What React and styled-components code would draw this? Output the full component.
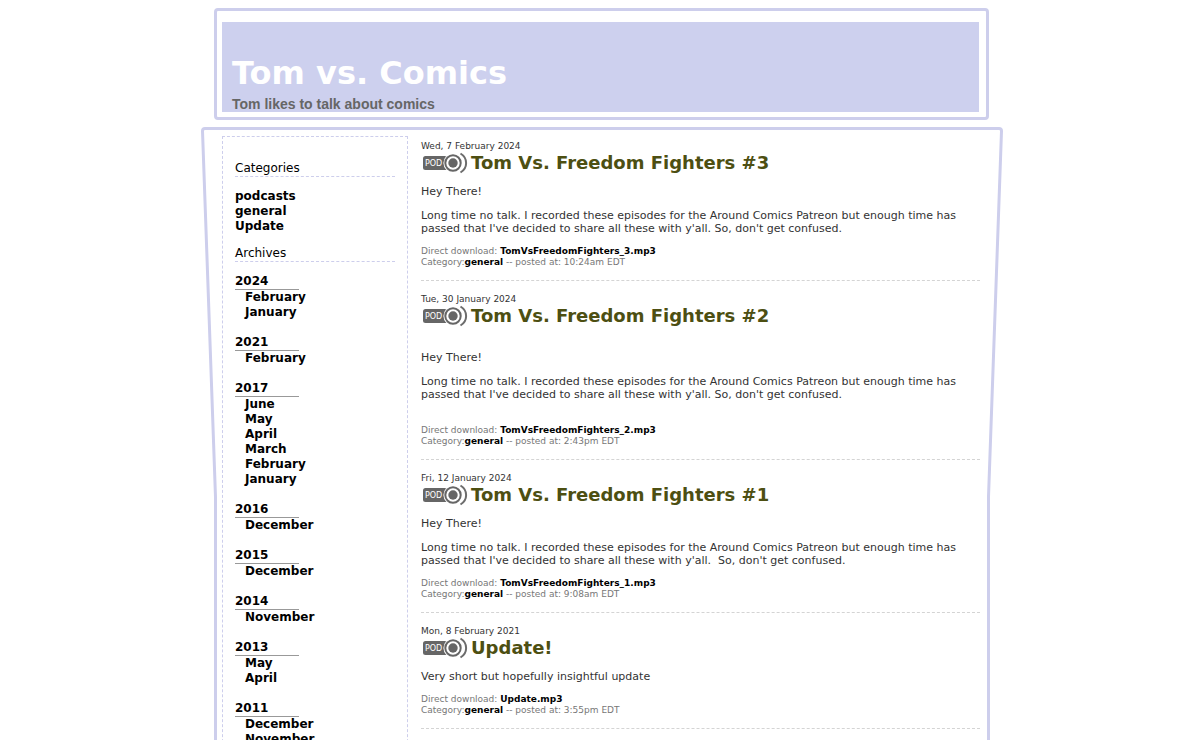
import React from 'react';
import styled, { createGlobalStyle } from 'styled-components';

const GlobalStyle = createGlobalStyle`
  body {
    margin: 0;
    padding: 8px 0 0 4px;
    background: #fff;
    color: #333;
    font-family: Verdana, 'DejaVu Sans', sans-serif;
    font-size: 11px;
  }
  html {
    scrollbar-width: none;
  }
  a {
    color: #000;
    font-weight: bold;
    text-decoration: none;
  }
`;

const Page = styled.div`
  max-width: 802px;
  margin: 0 auto;
`;

const Header = styled.header`
  margin: 0 14px 7px 13px;
  padding: 11px 7px 5px 5px;
  border: 3px solid #cdceec;
  border-radius: 4px;
`;

const Banner = styled.div`
  box-sizing: border-box;
  height: 90px;
  padding: 31px 10px 0;
  background: #cdd0ee;
`;

const SiteTitle = styled.h1`
  margin: 0;
  color: #fff;
  font-size: 32px;
  line-height: 40px;
`;

const Tagline = styled.h2`
  margin: 3px 0 0;
  color: #666;
  font-family: Arial, 'Liberation Sans', sans-serif;
  font-size: 14px;
  line-height: 16px;
`;

const Body = styled.div`
  position: relative;
  display: flex;
  align-items: flex-start;
  padding: 9px 23px 40px 21px;

  &::before {
    content: '';
    position: absolute;
    top: 370px;
    right: 13px;
    bottom: 0;
    left: 13px;
    border: solid #cdceec;
    border-width: 0 3px 3px;
    border-radius: 0 0 4px 4px;
    pointer-events: none;
  }
`;

const FrameTop = styled.svg`
  position: absolute;
  top: 0;
  left: 0;
  width: 100%;
  height: 370px;
  pointer-events: none;
`;

const Sidebar = styled.nav`
  box-sizing: border-box;
  flex: 0 0 186px;
  padding: 24px 12px;
  border: 1px dashed #cdceec;
  color: #000;
  font-size: 12px;
  line-height: 15px;
`;

const SectionTitle = styled.h3`
  margin: 0 0 12px;
  border-bottom: 1px dashed #cdceec;
  font-size: 12px;
  font-weight: normal;
`;

const LinkList = styled.ul`
  margin: 0;
  padding: 0 0 0 ${(props) => (props.$indent ? '10px' : '0')};
  list-style: none;
`;

const Categories = styled.div`
  margin-bottom: 12px;
`;

const Year = styled.div`
  margin-bottom: 15px;
`;

const YearTitle = styled.h4`
  width: 64px;
  margin: 0;
  border-bottom: 1px solid #999;
  font-size: 12px;
`;

const Posts = styled.main`
  flex: 1;
  min-width: 0;
  margin-left: 13px;
  padding-top: 4px;
`;

const Post = styled.article`
  margin-bottom: 12px;
  padding-bottom: 12px;
  border-bottom: 1px dashed #d4d4d4;
`;

const PostDate = styled.div`
  font-size: 9px;
  line-height: 11px;
  padding-top: 1px;
`;

const PostTitle = styled.h2`
  display: flex;
  align-items: center;
  gap: 2px;
  height: 22px;
  margin: 0;
  color: #4d4f12;
  font-size: 18px;
  line-height: 22px;
`;

const PostBody = styled.div`
  margin: 11px 0;
  padding: ${(props) => (props.$spaced ? '13px 0 2px' : '0')};
  line-height: 13px;

  p {
    margin: 0 0 11px;
  }
`;

const Meta = styled.div`
  color: #777;
  font-size: 9px;
  line-height: 11px;
`;

const categories = ['podcasts', 'general', 'Update'];

const archives = [
  { year: '2024', months: ['February', 'January'] },
  { year: '2021', months: ['February'] },
  { year: '2017', months: ['June', 'May', 'April', 'March', 'February', 'January'] },
  { year: '2016', months: ['December'] },
  { year: '2015', months: ['December'] },
  { year: '2014', months: ['November'] },
  { year: '2013', months: ['May', 'April'] },
  { year: '2011', months: ['December', 'November'] },
];

const longText =
  "Long time no talk. I recorded these episodes for the Around Comics Patreon but enough time has passed that I've decided to share all these with y'all. So, don't get confused.";

const posts = [
  {
    date: 'Wed, 7 February 2024',
    title: 'Tom Vs. Freedom Fighters #3',
    text: ['Hey There!', longText],
    file: 'TomVsFreedomFighters_3.mp3',
    time: '10:24am EDT',
  },
  {
    date: 'Tue, 30 January 2024',
    title: 'Tom Vs. Freedom Fighters #2',
    text: ['Hey There!', longText],
    spaced: true,
    file: 'TomVsFreedomFighters_2.mp3',
    time: '2:43pm EDT',
  },
  {
    date: 'Fri, 12 January 2024',
    title: 'Tom Vs. Freedom Fighters #1',
    text: ['Hey There!', longText.replace("y'all. So", "y'all. \u00a0So")],
    file: 'TomVsFreedomFighters_1.mp3',
    time: '9:08am EDT',
  },
  {
    date: 'Mon, 8 February 2021',
    title: 'Update!',
    text: ['Very short but hopefully insightful update'],
    file: 'Update.mp3',
    time: '3:55pm EDT',
  },
];

const PodIcon = () => (
  <svg width="48" height="22" viewBox="0 0 48 22" aria-hidden="true">
    <rect x="2" y="4" width="32" height="14" rx="2.5" fill="#666" />
    <circle cx="32" cy="11" r="9.6" fill="#fff" />
    <circle cx="32" cy="11" r="7.7" fill="none" stroke="#666" strokeWidth="2" />
    <circle cx="32" cy="11" r="4.7" fill="#666" />
    <path d="M39.5 1.5C47 6 47 16 39.5 20.5" fill="none" stroke="#6c6c6c" strokeWidth="2" />
    <text x="4" y="14" fill="#fff" fontSize="8" fontWeight="normal">
      POD
    </text>
  </svg>
);

const LinkItems = ({ items, indent }) => (
  <LinkList $indent={indent}>
    {items.map((item) => (
      <li key={item}>
        <a href="#">{item}</a>
      </li>
    ))}
  </LinkList>
);

const App = () => {
  return (
    <>
      <GlobalStyle />
      <Page>
        <Header>
          <Banner>
            <SiteTitle>Tom vs. Comics</SiteTitle>
            <Tagline>Tom likes to talk about comics</Tagline>
          </Banner>
        </Header>
        <Body>
          <FrameTop viewBox="0 0 802 370" preserveAspectRatio="none" aria-hidden="true">
            <path
              d="M14.5 370L1.5 4Q1.5 1.5 4 1.5H798Q800.5 1.5 800.5 4L787.5 370"
              fill="none"
              stroke="#cdceec"
              strokeWidth="3"
            />
          </FrameTop>
          <Sidebar>
            <Categories>
              <SectionTitle>Categories</SectionTitle>
              <LinkItems items={categories} />
            </Categories>
            <SectionTitle>Archives</SectionTitle>
            {archives.map(({ year, months }) => (
              <Year key={year}>
                <YearTitle>
                  <a href="#">{year}</a>
                </YearTitle>
                <LinkItems items={months} indent />
              </Year>
            ))}
          </Sidebar>
          <Posts>
            {posts.map((post) => (
              <Post key={post.title}>
                <PostDate>{post.date}</PostDate>
                <PostTitle>
                  <PodIcon />
                  {post.title}
                </PostTitle>
                <PostBody $spaced={post.spaced}>
                  {post.text.map((line) => (
                    <p key={line}>{line}</p>
                  ))}
                </PostBody>
                <Meta>
                  Direct download: <a href="#">{post.file}</a>
                </Meta>
                <Meta>
                  Category:<a href="#">general</a> -- posted at: {post.time}
                </Meta>
              </Post>
            ))}
          </Posts>
        </Body>
      </Page>
    </>
  );
};

export default App;
